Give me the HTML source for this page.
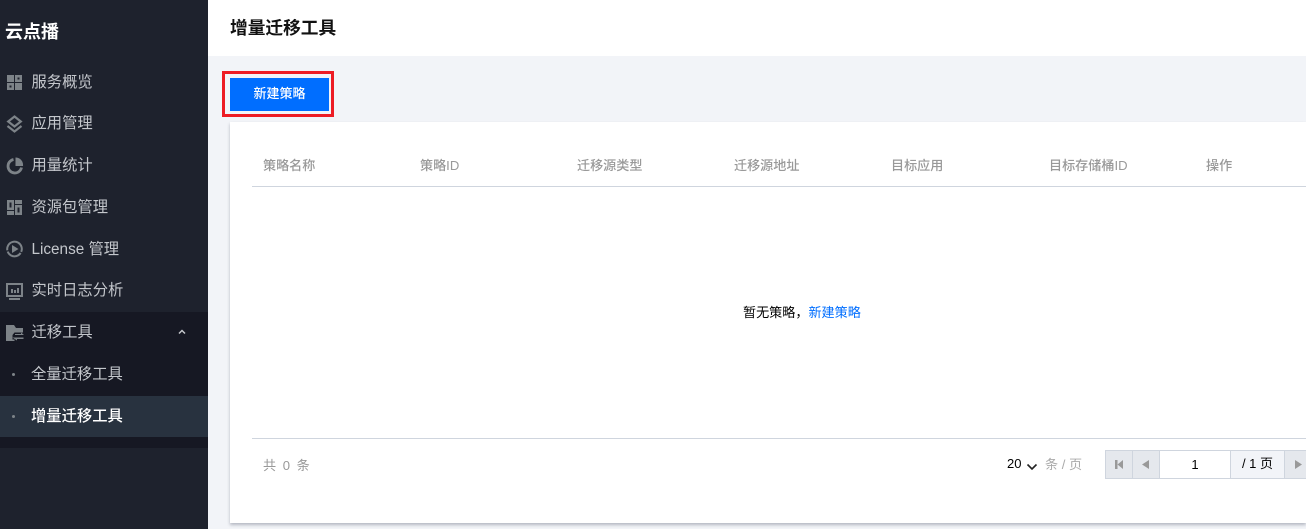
<!DOCTYPE html>
<html lang="zh"><head><meta charset="utf-8"><style>
html,body{margin:0;padding:0}
body{width:1306px;height:529px;overflow:hidden;background:#f2f4f8;position:relative;font-family:"Liberation Sans","Noto Sans CJK SC",sans-serif;font-size:14px}
.a{position:absolute;white-space:nowrap}
#side{left:0;top:0;width:208px;height:529px;background:#1e222d}
.m{left:31.500px;font-size:15.300px;line-height:20px;color:#c4c7cc}
.t{font-size:13.100px;color:#999;line-height:18px;top:157px;font-weight:500}
svg{position:absolute}
</style></head><body>
<div class="a" id="side"></div>
<div class="a" style="left:0;top:312px;width:208px;height:136px;background:#161823"></div>
<div class="a" style="left:0;top:396px;width:208px;height:41px;background:#28323f"></div>
<div class="a" style="left:5px;top:20px;font-size:18px;line-height:24px;font-weight:700;color:#fff">云点播</div>
<svg style="left:7px;top:75px" width="15" height="15"><path fill="#7d8388" d="M0 0h7v7H0zM8 0h7v7H8zM0 8h7v7H0zM8 8h7v7H8z"/><path fill="#1e222d" d="M10.500 2.500h2v2h-2zM2.500 10.500h2v2h-2z"/></svg>
<svg style="left:6px;top:115px" width="17" height="18" fill="none" stroke="#7d8388" stroke-width="2.200"><path d="M8.500 1.500l6.300 5-6.300 5-6.300-5z"/><path d="M1.500 11l7 5.500 7-5.500"/></svg>
<svg style="left:6px;top:157px" width="18" height="18" fill="none"><path d="M7.500 2.500a6.800 6.800 0 1 0 8 8" stroke="#7d8388" stroke-width="2.800"/><path d="M9.500 0.500a7.500 7.500 0 0 1 7.500 8.500h-7.500z" fill="#7d8388"/></svg>
<svg style="left:7px;top:200px" width="15" height="15"><path fill="#7d8388" d="M0 0h7v10H0zM8 0h7v4H8zM0 11h7v4H0zM8 5h7v10H8z"/><path fill="#1e222d" d="M2.500 2.500h2v5h-2zM10.500 7.500h2v5h-2z"/></svg>
<svg style="left:6px;top:240px" width="18" height="18" fill="none"><circle cx="8.500" cy="9" r="7.300" stroke="#7d8388" stroke-width="2" stroke-dasharray="10.500 1.300 16 1.300 17" transform="rotate(-60 8.500 9)"/><path d="M6 5l6.500 4-6.500 4z" fill="#7d8388"/></svg>
<svg style="left:6px;top:283px" width="18" height="18" fill="none"><rect x="1" y="1" width="15" height="12" stroke="#7d8388" stroke-width="2"/><path d="M3 15h11v2H3z" fill="#7d8388"/><path d="M5 6h2v4H5zM8 7h2v3H8zM11 5h2v5h-2z" fill="#7d8388"/></svg>
<svg style="left:6px;top:325px" width="18" height="17"><path fill="#7d8388" d="M0 0h8l2 3h7v4.500H8.500L6.500 10v6H0z"/><path fill="#7d8388" d="M9 9h6V7.500l3 2.500H9zM6.500 12.500h11v1.500H11v1.500z"/><path fill="#7d8388" d="M6.500 14.500h2V16h-2z"/></svg>
<svg style="left:178px;top:329px" width="8" height="6" fill="none"><path d="M1 4.500L4 1.500l3 3" stroke="#c4c7cc" stroke-width="1.500"/></svg>
<div class="a" style="left:12px;top:373px;width:3px;height:3px;border-radius:2px;background:#7d8388"></div>
<div class="a" style="left:12px;top:415px;width:3px;height:3px;border-radius:2px;background:#7d8388"></div>
<div class="a m" style="top:73px">服务概览</div>
<div class="a m" style="top:114px">应用管理</div>
<div class="a m" style="top:156px">用量统计</div>
<div class="a m" style="top:198px">资源包管理</div>
<div class="a m" style="top:240px">License 管理</div>
<div class="a m" style="top:281px">实时日志分析</div>
<div class="a m" style="top:323px">迁移工具</div>
<div class="a m" style="top:365px;left:31px">全量迁移工具</div>
<div class="a m" style="top:407px;left:31px;color:#fff;font-weight:500">增量迁移工具</div>

<div class="a" style="left:208px;top:0;width:1098px;height:56px;background:#fff"></div>
<div class="a" style="left:230px;top:16px;font-size:17.700px;line-height:24px;font-weight:700;color:#111">增量迁移工具</div>
<div class="a" style="left:222px;top:71px;width:106px;height:40px;border:3px solid #ed1c24"></div>
<div class="a" style="left:230px;top:78px;width:99px;height:33px;background:#006eff;color:#fff;text-align:center;line-height:32px;font-size:13px;font-weight:500">新建策略</div>

<div class="a" style="left:230px;top:122px;width:1076px;height:401px;background:#fff;box-shadow:0 2px 3px 0 rgba(54,58,80,.32)"></div>
<div class="a t" style="left:263px">策略名称</div>
<div class="a t" style="left:420px">策略ID</div>
<div class="a t" style="left:577px">迁移源类型</div>
<div class="a t" style="left:734px">迁移源地址</div>
<div class="a t" style="left:891px">目标应用</div>
<div class="a t" style="left:1049px">目标存储桶ID</div>
<div class="a t" style="left:1206px">操作</div>
<div class="a" style="left:252px;top:186px;width:1054px;height:1px;background:#cfd5de"></div>
<div class="a" style="left:743px;top:304px;font-size:13.100px;line-height:18px;color:#000">暂无策略，<span style="color:#006eff">新建策略</span></div>
<div class="a" style="left:252px;top:438px;width:1054px;height:1px;background:#cfd5de"></div>
<div class="a" style="left:263px;top:457px;font-size:13.100px;line-height:18px;color:#999;word-spacing:3px">共 0 条</div>
<div class="a" style="left:1007px;top:455px;font-size:13px;line-height:18px;color:#000">20</div>
<svg style="left:1026px;top:463px" width="12" height="8" fill="none"><path d="M1.500 1.500L6 6l4.500-4.500" stroke="#222" stroke-width="1.600"/></svg>
<div class="a" style="left:1045px;top:456px;font-size:13.100px;line-height:18px;color:#aaa">条 / 页</div>
<div class="a" style="left:1105px;top:450px;width:201px;height:27px;background:#e5e8ed;border:1px solid #cfd5de;border-right:0"></div>
<div class="a" style="left:1132px;top:450px;width:1px;height:28px;background:#cfd5de"></div>
<div class="a" style="left:1159px;top:451px;width:1px;height:27px;background:#cfd5de"></div>
<div class="a" style="left:1160px;top:451px;width:70px;height:27px;background:#fff;border-right:1px solid #cfd5de;text-align:center;font-size:13px;line-height:27px;color:#000">1</div>
<div class="a" style="left:1231px;top:451px;width:53px;height:27px;background:#f2f4f8;border-right:1px solid #cfd5de;text-align:center;font-size:13px;line-height:26px;color:#000">/ 1 页</div>
<svg style="left:1115px;top:460px" width="9" height="10"><path fill="#999" d="M0 0h2.500v9H0zM8 0v9L2.500 4.500z"/></svg>
<svg style="left:1142px;top:460px" width="8" height="10"><path fill="#999" d="M7 0v9L0 4.500z"/></svg>
<svg style="left:1295px;top:460px" width="8" height="10"><path fill="#999" d="M0 0v9l7-4.500z"/></svg>
</body></html>
